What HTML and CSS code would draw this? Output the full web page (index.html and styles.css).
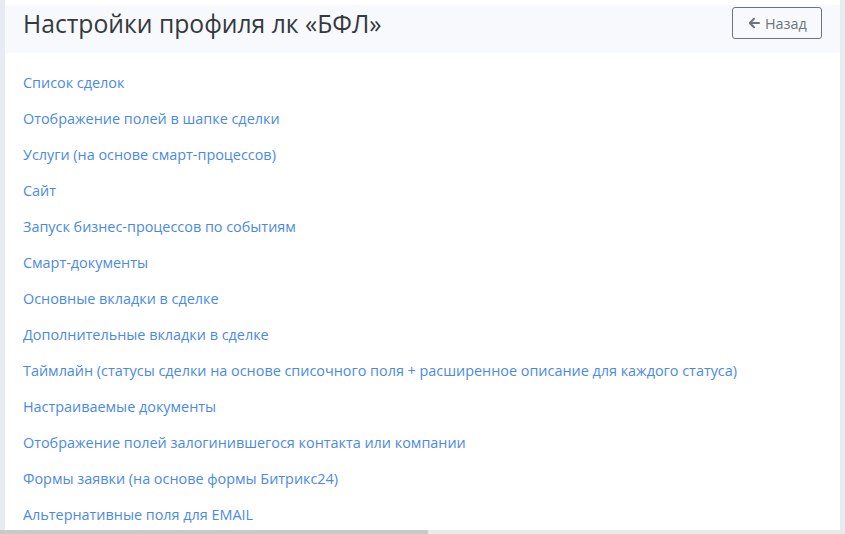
FILE: index.html
```html
<!DOCTYPE html>
<html lang="ru">
<head>
<meta charset="utf-8">
<title>Настройки профиля лк «БФЛ»</title>
<link rel="stylesheet" href="styles.css">
</head>
<body>
<div class="viewport">
  <div class="card">
    <div class="card-header">
      <h1 class="title">Настройки профиля лк «БФЛ»</h1>
      <a class="btn-back" href="#"><svg class="arrow" width="12" height="12" viewBox="0 0 12 12"><path d="M11 6H2.2M6 1.8L1.8 6L6 10.2" fill="none" stroke="#6c757d" stroke-width="2" stroke-linecap="round" stroke-linejoin="round"/></svg>Назад</a>
    </div>
    <ul class="links">
      <li><a href="#">Список сделок</a></li>
      <li><a href="#">Отображение полей в шапке сделки</a></li>
      <li><a href="#">Услуги (на основе смарт-процессов)</a></li>
      <li><a href="#">Сайт</a></li>
      <li><a href="#">Запуск бизнес-процессов по событиям</a></li>
      <li><a href="#">Смарт-документы</a></li>
      <li><a href="#">Основные вкладки в сделке</a></li>
      <li><a href="#">Дополнительные вкладки в сделке</a></li>
      <li><a href="#">Таймлайн (статусы сделки на основе списочного поля + расширенное описание для каждого статуса)</a></li>
      <li><a href="#">Настраиваемые документы</a></li>
      <li><a href="#">Отображение полей залогинившегося контакта или компании</a></li>
      <li><a href="#">Формы заявки (на основе формы Битрикс24)</a></li>
      <li><a href="#">Альтернативные поля для EMAIL</a></li>
    </ul>
  </div>
</div>
<div class="hscroll"><div class="thumb"></div></div>
</body>
</html>
```
FILE: styles.css
```css
* { box-sizing: border-box; }
html, body { margin: 0; padding: 0; }
body {
  width: 845px;
  height: 534px;
  overflow: hidden;
  background: #e8ebf1;
  font-family: "Open Sans", "Noto Sans", sans-serif;
}
.viewport {
  height: 530px;
  padding: 0 5px 0 5px;
  overflow: hidden;
}
.card {
  background: #ffffff;
  height: 530px;
  padding-top: 5px;
}
.card-header {
  background: #f8f9fc;
  height: 48px;
  display: flex;
  align-items: flex-start;
  justify-content: space-between;
  padding: 0 18px 0 18px;
}
.title {
  margin: 0;
  font-weight: 400;
  font-size: 24.7px;
  line-height: 37px;
  color: #343a40;
}
.btn-back {
  margin-top: 2px;
  display: flex;
  align-items: center;
  gap: 5px;
  height: 32px;
  width: 90px;
  padding: 0 0 0 15px;
  border: 1px solid #6c757d;
  border-radius: 3px;
  color: #6c757d;
  font-size: 14.4px;
  text-decoration: none;
}
.arrow { display: block; }
.links {
  list-style: none;
  margin: 0;
  padding: 19px 18px 0 18px;
}
.links li {
  height: 36px;
  line-height: 20px;
}
.links a {
  font-size: 14.4px;
  color: #4a8ae6;
  text-decoration: none;
}
.hscroll {
  height: 4px;
  background: #eaeaea;
}
.thumb {
  width: 428px;
  height: 4px;
  background: #c9c9c9;
}
```
